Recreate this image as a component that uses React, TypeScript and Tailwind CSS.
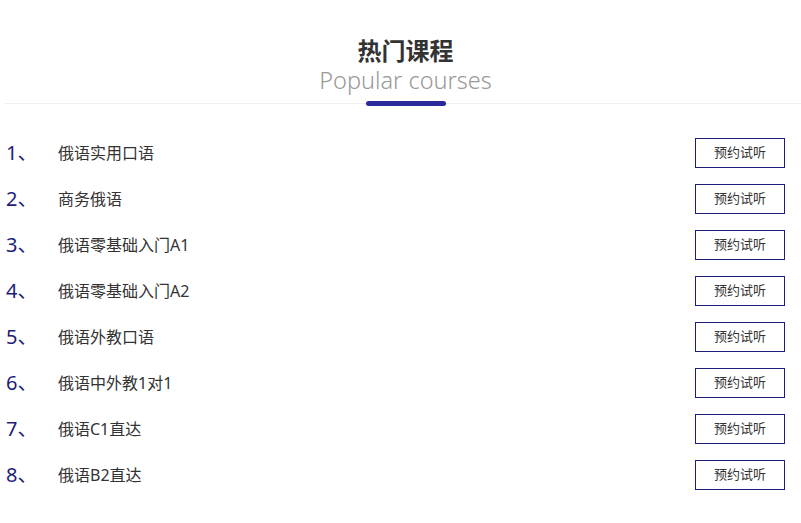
import React from "react";

const courses = [
  "俄语实用口语",
  "商务俄语",
  "俄语零基础入门A1",
  "俄语零基础入门A2",
  "俄语外教口语",
  "俄语中外教1对1",
  "俄语C1直达",
  "俄语B2直达",
];

const App = () => {
  return (
    <div
      className="w-[801px] h-[523px] bg-white pl-[5px] overflow-hidden"
      style={{ fontFamily: '"Microsoft YaHei", "Noto Sans", "Noto Sans CJK SC", sans-serif' }}
    >
      <header className="pt-[35px] text-center">
        <div className="pl-[5px]">
          <h2 className="text-[24px] leading-[32px] font-bold text-[#333]">热门课程</h2>
          <p className="text-[23.5px] leading-[28px] font-light text-[#999] -mt-[1px]">Popular courses</p>
        </div>
        <div className="relative mt-[9px] h-px bg-[#eee]">
          <div className="absolute left-[361px] -top-[2px] w-[80px] h-[5px] rounded-full bg-[#2b2a9a]" />
        </div>
      </header>
      <ul className="pt-[26px] pr-[16px]">
        {courses.map((name, i) => (
          <li key={name} className="h-[46px] flex items-center">
            <span className="w-[53px] pl-[1px] text-[20px] text-[#1d1d7a]">{i + 1}、</span>
            <span className="flex-1 text-[16px] text-[#333]">{name}</span>
            <button className="w-[90px] h-[30px] border border-[#1d1d7a] text-[13px] text-[#333]">
              预约试听
            </button>
          </li>
        ))}
      </ul>
    </div>
  );
};

export default App;
